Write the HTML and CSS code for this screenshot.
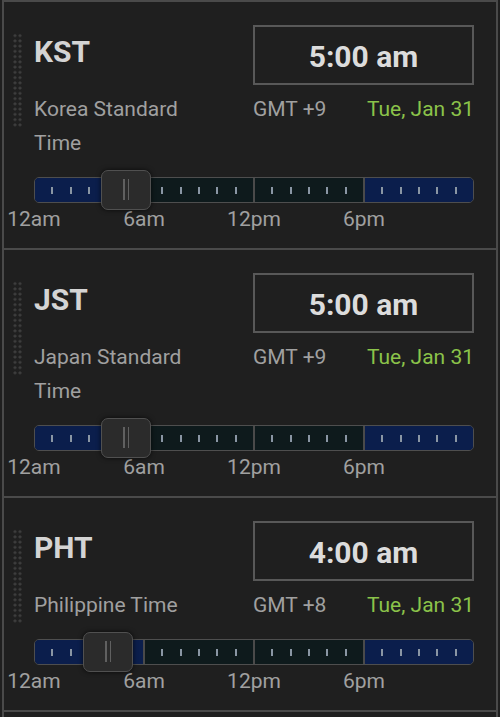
FILE: index.html
```html
<!DOCTYPE html>
<html lang="en">
<head>
    <meta charset="UTF-8">
    <meta name="viewport" content="width=device-width, initial-scale=1.0">
    <title>World Clock</title>
    <link rel="stylesheet" href="styles.css">
</head>
<body>
    <div class="zone-list">

        <div class="zone">
            <div class="grip"></div>
            <div class="zone-body">
                <div class="zone-head">
                    <div class="abbr">KST</div>
                    <div class="clock">5:00 am</div>
                    <div class="full-name">Korea Standard Time</div>
                    <div class="meta">
                        <span class="gmt">GMT +9</span>
                        <span class="date">Tue, Jan 31</span>
                    </div>
                </div>
                <div class="track">
                    <div class="seg night"><i></i><i></i><i></i><i></i><i></i></div>
                    <div class="seg day"><i></i><i></i><i></i><i></i><i></i></div>
                    <div class="seg day"><i></i><i></i><i></i><i></i><i></i></div>
                    <div class="seg night"><i></i><i></i><i></i><i></i><i></i></div>
                    <div class="thumb" style="left: 20.833%;"><span></span><span></span></div>
                </div>
                <div class="marks">
                    <span>12am</span><span>6am</span><span>12pm</span><span>6pm</span>
                </div>
            </div>
        </div>

        <div class="zone">
            <div class="grip"></div>
            <div class="zone-body">
                <div class="zone-head">
                    <div class="abbr">JST</div>
                    <div class="clock">5:00 am</div>
                    <div class="full-name">Japan Standard Time</div>
                    <div class="meta">
                        <span class="gmt">GMT +9</span>
                        <span class="date">Tue, Jan 31</span>
                    </div>
                </div>
                <div class="track">
                    <div class="seg night"><i></i><i></i><i></i><i></i><i></i></div>
                    <div class="seg day"><i></i><i></i><i></i><i></i><i></i></div>
                    <div class="seg day"><i></i><i></i><i></i><i></i><i></i></div>
                    <div class="seg night"><i></i><i></i><i></i><i></i><i></i></div>
                    <div class="thumb" style="left: 20.833%;"><span></span><span></span></div>
                </div>
                <div class="marks">
                    <span>12am</span><span>6am</span><span>12pm</span><span>6pm</span>
                </div>
            </div>
        </div>

        <div class="zone">
            <div class="grip"></div>
            <div class="zone-body">
                <div class="zone-head">
                    <div class="abbr">PHT</div>
                    <div class="clock">4:00 am</div>
                    <div class="full-name">Philippine Time</div>
                    <div class="meta">
                        <span class="gmt">GMT +8</span>
                        <span class="date">Tue, Jan 31</span>
                    </div>
                </div>
                <div class="track">
                    <div class="seg night"><i></i><i></i><i></i><i></i><i></i></div>
                    <div class="seg day"><i></i><i></i><i></i><i></i><i></i></div>
                    <div class="seg day"><i></i><i></i><i></i><i></i><i></i></div>
                    <div class="seg night"><i></i><i></i><i></i><i></i><i></i></div>
                    <div class="thumb" style="left: 16.667%;"><span></span><span></span></div>
                </div>
                <div class="marks">
                    <span>12am</span><span>6am</span><span>12pm</span><span>6pm</span>
                </div>
            </div>
        </div>

        <div class="zone zone-next"></div>

    </div>
</body>
</html>
```

FILE: styles.css
```css
body {
    margin: 0;
    background-color: #1f1f1f;
    font-family: Roboto, "Liberation Sans", sans-serif;
    color: #a0a0a0;
}

.zone-list {
    margin: 0 2px;
    border-left: 2px solid #4a4a4a;
    border-right: 2px solid #4a4a4a;
}

.zone {
    display: flex;
    border-top: 2px solid #4a4a4a;
    padding: 23px 22px 17px 9px;
}

.zone-next {
    padding: 0;
    height: 10px;
}

/* drag handle */
.grip {
    flex: 0 0 9px;
    height: 95px;
    margin-top: 8px;
    background-image: radial-gradient(circle, #3d3d3d 1.3px, transparent 1.6px);
    background-size: 5px 5.25px;
    background-position: -0.5px 0;
}

.zone-body {
    flex: 1;
    margin-left: 12px;
}

.zone-head {
    display: grid;
    grid-template-columns: 1fr 221px;
    row-gap: 7px;
}

.abbr {
    font-size: 30px;
    font-weight: 700;
    color: #d4d4d4;
    line-height: 35px;
    margin-top: 9px;
}

.clock {
    height: 60px;
    box-sizing: border-box;
    border: 2px solid #585858;
    padding-top: 2px;
    display: flex;
    align-items: center;
    justify-content: center;
    font-size: 30px;
    font-weight: 700;
    color: #dcdcdc;
}

.full-name {
    font-size: 21px;
    line-height: 34px;
    max-width: 190px;
}

.meta {
    display: flex;
    justify-content: space-between;
    font-size: 21px;
    line-height: 34px;
}

.date {
    color: #8bc34a;
}

/* 24h slider */
.track {
    position: relative;
    display: flex;
    height: 26px;
    margin-top: 17px;
    border: 1.5px solid #4e4e4e;
    border-radius: 5px;
    box-sizing: border-box;
}

.seg {
    flex: 1;
    display: flex;
    align-items: center;
    justify-content: space-evenly;
}

.seg + .seg {
    border-left: 2px solid #4a4a4a;
}

.seg:first-child {
    border-radius: 4px 0 0 4px;
}

.seg:nth-child(4) {
    border-radius: 0 4px 4px 0;
}

.night {
    background-color: #0b1e4c;
}

.day {
    background-color: #0e1a1c;
}

.seg i {
    width: 2px;
    height: 7px;
    background-color: #8a96a4;
}

.thumb {
    position: absolute;
    top: -8.5px;
    width: 50px;
    height: 40px;
    transform: translateX(-50%);
    box-sizing: border-box;
    background-color: #2b2b2b;
    border: 1.5px solid #505050;
    border-radius: 7px;
    box-shadow: 0 0 5px rgba(0,0,0,0.7);
    display: flex;
    justify-content: center;
    align-items: center;
    gap: 3px;
}

.thumb span {
    width: 1.5px;
    height: 21px;
    background-color: #606060;
}

.marks {
    display: flex;
    margin-left: -55px;
    margin-top: 4px;
    font-size: 21px;
    line-height: 24px;
}

.marks span {
    width: 110px;
    text-align: center;
}
```
